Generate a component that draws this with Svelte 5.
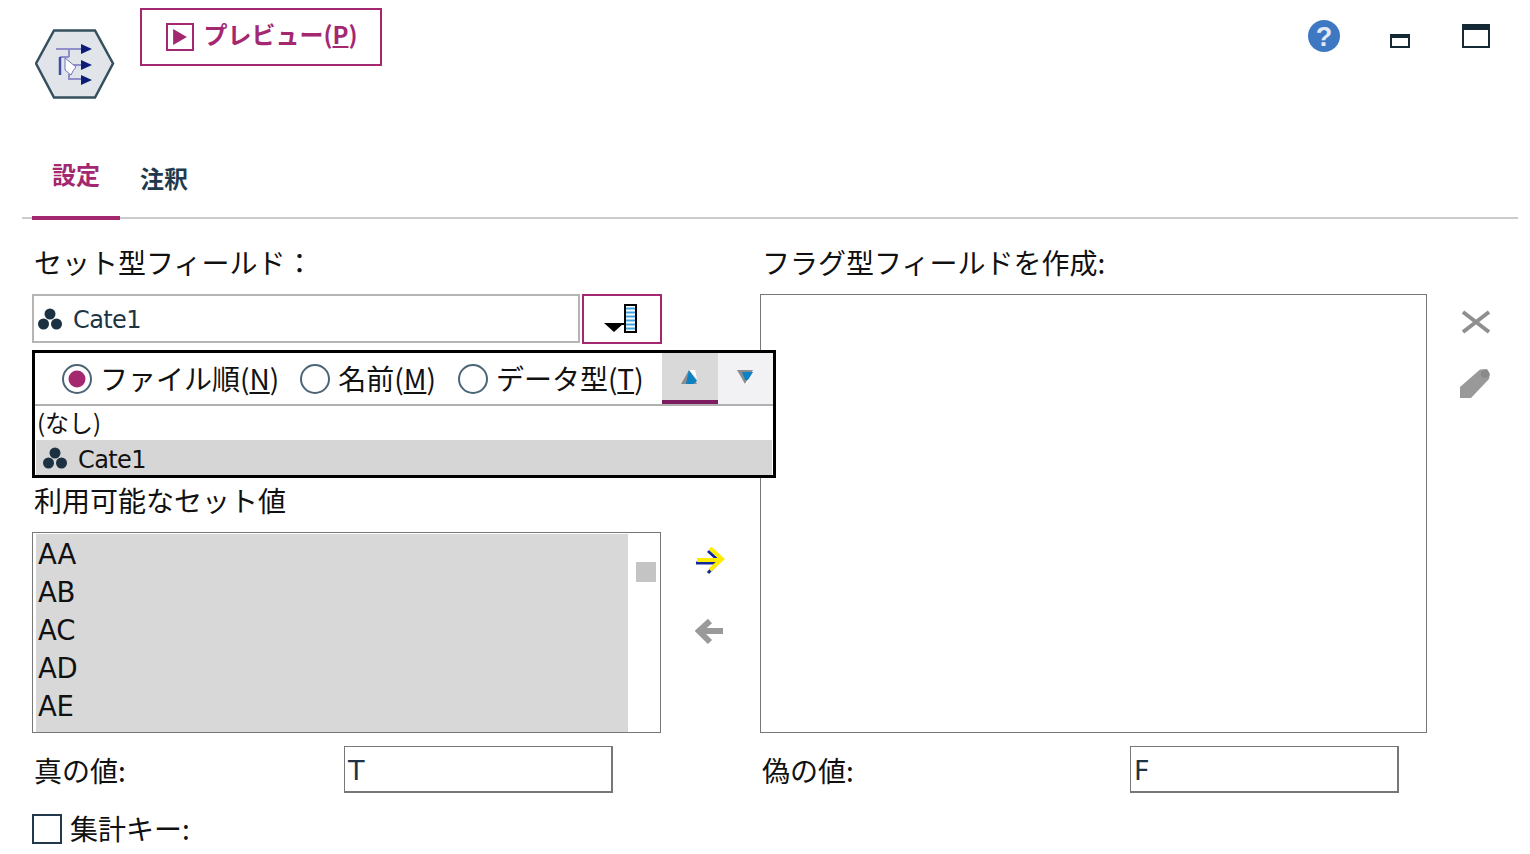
<script>
  const values = ['AA', 'AB', 'AC', 'AD', 'AE'];
  const magenta = '#a3286f';
</script>

{#snippet setIcon()}
  <svg class="seticon" viewBox="0 0 26 24" width="26" height="24" aria-hidden="true">
    <circle cx="13" cy="7" r="5.5" fill="#1c3142" />
    <circle cx="6.5" cy="17" r="5.5" fill="#1c3142" />
    <circle cx="19.5" cy="17" r="5.5" fill="#1c3142" />
  </svg>
{/snippet}

{#snippet radio(on)}
  <svg class="radio" viewBox="0 0 32 32" width="32" height="32" aria-hidden="true">
    <circle cx="16" cy="16" r="14" fill="#fff" stroke="#4b6476" stroke-width="2" />
    {#if on}<circle cx="16" cy="16" r="8.5" fill={magenta} />{/if}
  </svg>
{/snippet}

<div class="page">
  <header class="head">
    <svg class="node" viewBox="0 0 80 72" width="80" height="72" aria-hidden="true">
      <polygon points="1,35.500 19,2.500 60,2.500 78,35.500 60,69.500 19,69.500" fill="#e1e5e9" stroke="#36505f" stroke-width="2.500" />
      <path d="M21 21H47M34 21V29M25 29H34M34 46V51H47M34 37H47" fill="none" stroke="#8f90c9" stroke-width="2" />
      <path d="M25 29V47" stroke="#3f4fa5" stroke-width="2.500" fill="none" />
      <path d="M30 30L41 39L38 43L36 47L30 42Z" fill="#fff" stroke="#6f75bb" stroke-width="1" />
      <path d="M46 16L57 21L46 26ZM46 32L57 37L46 42ZM46 47L57 52L46 57Z" fill="#0c1a78" />
    </svg>
    <button class="preview">
      <span class="playbox"><svg viewBox="0 0 14 14" width="16" height="16" aria-hidden="true"><path d="M1 0L13 7L1 14Z" fill={magenta} /></svg></span>
      <span class="ptext">プレビュー(<u>P</u>)</span>
    </button>
    <div class="winbtns">
      <svg viewBox="0 0 32 32" width="32" height="32" aria-hidden="true">
        <circle cx="16" cy="16" r="16" fill="#3f78c2" />
        <text x="16" y="26" text-anchor="middle" class="q">?</text>
      </svg>
      <span class="min"></span>
      <span class="max"></span>
    </div>
  </header>

  <nav class="tabs">
    <div class="tab active">設定</div>
    <div class="tab second">注釈</div>
  </nav>

  <main class="form">
    <div class="label">セット型フィールド：</div>
    <div></div>
    <div class="label">フラグ型フィールドを作成:</div>
    <div></div>

    <div class="combo">
      <div class="field">{@render setIcon()}<span class="name">Cate1</span></div>
      <button class="pick" aria-label="フィールド選択">
        <svg viewBox="0 0 34 30" width="34" height="30" aria-hidden="true">
          <path d="M0 19L10 28L20 19Z" fill="#000" />
          <path d="M16 20H22" stroke="#000" stroke-width="2" />
          <rect x="21" y="1" width="11" height="27" fill="#fff" stroke="#000" stroke-width="2" />
          <path d="M22 4.500H31M22 8.500H31M22 12.500H31M22 16.500H31M22 20.500H31M22 24.500H31" stroke="#3ea3dc" stroke-width="2.200" />
        </svg>
      </button>
      <div class="popup">
        <div class="sortbar">
          <label class="opt first">{@render radio(true)}<span>ファイル順(<u>N</u>)</span></label>
          <label class="opt">{@render radio(false)}<span>名前(<u>M</u>)</span></label>
          <label class="opt third">{@render radio(false)}<span>データ型(<u>T</u>)</span></label>
          <button class="sort up" aria-label="昇順">
            <svg viewBox="0 0 18 16" width="18" height="16" aria-hidden="true"><path d="M9 1L17 15H1Z" fill="#8c8c8c" /><path d="M9 1L17 12L13 15H6Z" fill="#0a82c4" /><path d="M9 1L15 1L17 10Z" fill="#fff" /></svg>
          </button>
          <button class="sort down" aria-label="降順">
            <svg viewBox="0 0 18 16" width="18" height="16" aria-hidden="true"><path d="M1 1H17L9 15Z" fill="#8c8c8c" /><path d="M6 3H17L12 11L9 11Z" fill="#0a82c4" /><path d="M17 3L11 15H9L14 9Z" fill="#fff" /></svg>
          </button>
        </div>
        <div class="row"><span class="none">(なし)</span></div>
        <div class="row sel">{@render setIcon()}<span class="name dark">Cate1</span></div>
      </div>
    </div>
    <div></div>
    <div class="biglist"></div>
    <div class="sideicons">
      <svg viewBox="0 0 30 24" width="30" height="24" aria-hidden="true"><path d="M2 2L28 22M28 2L2 22" stroke="#8f8f8f" stroke-width="4" fill="none" /></svg>
      <svg class="pencil" viewBox="0 0 30 30" width="30" height="30" aria-hidden="true"><path d="M20 1.500L27 1L30 6L29 11L11 30H0V19Z" fill="#999" /><circle cx="25" cy="6" r="4" fill="#8a8a8a" /></svg>
    </div>

    <div class="label setlabel">利用可能なセット値</div>
    <div></div>

    <div class="values">
      <div class="items">
        {#each values as v}<div class="item">{v}</div>{/each}
      </div>
      <div class="track"><div class="thumb"></div></div>
    </div>
    <div class="moves">
      <svg viewBox="0 0 30 28" width="30" height="28" aria-hidden="true">
        <path d="M1 16H22M13 4L24 14L13 26" fill="none" stroke="#10289a" stroke-width="3" />
        <path d="M2 13H25M15 1L27 12L15 23" fill="none" stroke="#ffec00" stroke-width="4" />
      </svg>
      <svg viewBox="0 0 30 28" width="30" height="28" aria-hidden="true">
        <path d="M28 13H6M15 3L4 13L15 24" fill="none" stroke="#9a9a9a" stroke-width="6" />
      </svg>
    </div>
  </main>

  <section class="vals">
    <div class="valcell left"><span class="label">真の値:</span><div class="input">T</div></div>
    <div class="valcell"><span class="label">偽の値:</span><div class="input">F</div></div>
  </section>

  <label class="check"><span class="box"></span><span class="label">集計キー:</span></label>
</div>

<style>
  :global(body) {
    margin: 0;
    background: #fff;
    color: #111;
    font-family: "Noto Sans CJK JP", "Noto Sans", sans-serif;
  }
  .page {
    width: 1530px;
    height: 854px;
    overflow: hidden;
    font-size: 28px;
    line-height: 36px;
  }
  button {
    font: inherit;
    background: none;
    padding: 0;
    border: 0;
  }
  .head {
    display: flex;
    align-items: flex-start;
    height: 140px;
    padding: 8px 40px 0 35px;
    box-sizing: border-box;
  }
  .node { margin-top: 20px; }
  .preview {
    display: flex;
    align-items: center;
    justify-content: center;
    gap: 9px;
    width: 242px;
    height: 58px;
    margin-left: 25px;
    border: 2px solid #a3286f;
    box-sizing: border-box;
    color: #a3286f;
    font-size: 24px;
    font-weight: 700;
  }
  .ptext { padding-bottom: 6px; }
  .playbox {
    display: flex;
    align-items: center;
    justify-content: center;
    width: 28px;
    height: 28px;
    margin-left: 2px;
    box-sizing: border-box;
    border: 2px solid #a3286f;
  }
  .winbtns {
    margin-left: auto;
    margin-top: 12px;
    display: flex;
    align-items: flex-start;
    gap: 50px;
  }
  .q {
    font: 700 27px "Liberation Sans", sans-serif;
    fill: #e2eaf6;
  }
  .min {
    width: 20px;
    height: 14px;
    margin-top: 14px;
    margin-right: 2px;
    box-sizing: border-box;
    border: 2px solid #152935;
    border-top-width: 4px;
  }
  .max {
    width: 28px;
    height: 24px;
    margin-top: 4px;
    box-sizing: border-box;
    border: 2px solid #152935;
    border-top-width: 6px;
  }
  .tabs {
    display: flex;
    margin: 0 12px 0 22px;
    padding-left: 10px;
    border-bottom: 2px solid #cccccc;
    height: 77px;
  }
  .tab {
    width: 88px;
    height: 80px;
    box-sizing: border-box;
    text-align: center;
    font-size: 24px;
    font-weight: 700;
    padding-top: 16px;
    color: #1f3a4d;
  }
  .tab.active {
    color: #a3286f;
    border-bottom: 4px solid #a3286f;
  }
  .tab.second { padding-top: 20px; }
  .form {
    display: grid;
    grid-template-columns: 629px 99px 667px 103px;
    grid-template-rows: 50px 50px 188px 201px;
    padding: 25px 0 0 32px;
  }
  .label {
    padding-left: 2px;
    white-space: nowrap;
    font-size: 28px;
  }
  .setlabel {
    grid-column: 1;
    grid-row: 3;
    align-self: end;
    padding-bottom: 14px;
  }
  .combo {
    position: relative;
    display: flex;
    gap: 2px;
    width: 630px;
  }
  .field {
    flex: 1;
    display: flex;
    align-items: center;
    gap: 10px;
    padding-left: 3px;
    border: 2px solid #b5b5b5;
    box-sizing: border-box;
    height: 49px;
  }
  .name {
    color: #1d3444;
    font-family: "DejaVu Sans", sans-serif;
    font-size: 24px;
    letter-spacing: -0.6px;
    padding-top: 2px;
  }
  .name.dark {
    color: #111;
    padding-top: 4px;
  }
  .pick {
    display: flex;
    align-items: center;
    justify-content: center;
    width: 80px;
    height: 50px;
    padding-right: 3px;
    box-sizing: border-box;
    border: 2px solid #a3286f;
  }
  .popup {
    position: absolute;
    top: 56px;
    left: 0;
    width: 744px;
    height: 128px;
    box-sizing: border-box;
    border: 3px solid #000;
    background: #fff;
    z-index: 2;
  }
  .sortbar {
    display: flex;
    align-items: stretch;
    height: 53px;
    border-bottom: 2px solid #b0b0b0;
    box-sizing: border-box;
  }
  .opt {
    display: flex;
    align-items: center;
    gap: 7px;
    margin-left: 20px;
    white-space: nowrap;
  }
  .opt span { padding-bottom: 2px; }
  .opt.first { margin-left: 26px; }
  .opt.third { margin-left: 21px; }
  .sort {
    display: flex;
    align-items: center;
    justify-content: center;
    width: 56px;
    padding-bottom: 4px;
    padding-right: 2px;
    box-sizing: border-box;
  }
  .sort.up {
    margin-left: auto;
    background: #d9d9d9;
    border-bottom: 4px solid #7d1c5f;
    padding-bottom: 0;
  }
  .sort.down {
    width: 55px;
    background: #f2f2f5;
  }
  .row {
    display: flex;
    align-items: center;
    gap: 10px;
    height: 34px;
    margin: 0 1px;
    padding-left: 1px;
    font-size: 24px;
  }
  .none { padding-bottom: 2px; }
  .row.sel {
    height: 35px;
    padding-left: 6px;
    background: #d6d6d6;
  }
  .biglist {
    grid-column: 3;
    grid-row: 2 / 5;
    border: 1px solid #777;
    box-sizing: border-box;
  }
  .sideicons {
    grid-column: 4;
    grid-row: 2 / 5;
    display: flex;
    flex-direction: column;
    align-items: flex-start;
    gap: 34px;
    padding: 16px 0 0 34px;
  }
  .pencil { margin-left: -1px; }
  .values {
    grid-column: 1;
    grid-row: 4;
    display: flex;
    border: 1px solid #777;
    box-sizing: border-box;
    padding: 1px 0 0 3px;
  }
  .items {
    width: 592px;
    background: #d8d8d8;
    padding-left: 2px;
    box-sizing: border-box;
    overflow: hidden;
  }
  .item {
    height: 38px;
    line-height: 40px;
    font-family: "DejaVu Sans", sans-serif;
    font-size: 27.5px;
    letter-spacing: -0.2px;
  }
  .track { flex: 1; padding: 28px 0 0 8px; }
  .thumb {
    width: 20px;
    height: 20px;
    background: #c4c4c4;
  }
  .moves {
    grid-column: 2;
    grid-row: 4;
    display: flex;
    flex-direction: column;
    gap: 43px;
    padding: 15px 0 0 34px;
  }
  .vals {
    display: flex;
    margin-top: 13px;
    padding-left: 32px;
  }
  .valcell {
    display: flex;
    align-items: center;
    width: 728px;
  }
  .valcell .label { width: 310px; }
  .valcell .input { width: 269px; }
  .valcell:not(.left) .label { width: 368px; }
  .input {
    height: 47px;
    line-height: 48px;
    padding-left: 3px;
    box-sizing: border-box;
    border: 1px solid #777;
    border-bottom-width: 2px;
    border-right-width: 2px;
    font-family: "DejaVu Sans", sans-serif;
    font-size: 27px;
    color: #1d3444;
  }
  .check {
    display: flex;
    align-items: flex-start;
    gap: 6px;
    margin: 17px 0 0 32px;
  }
  .box {
    width: 30px;
    height: 30px;
    margin-top: 4px;
    box-sizing: border-box;
    border: 2px solid #22394d;
  }
  .seticon { flex: none; }
</style>
